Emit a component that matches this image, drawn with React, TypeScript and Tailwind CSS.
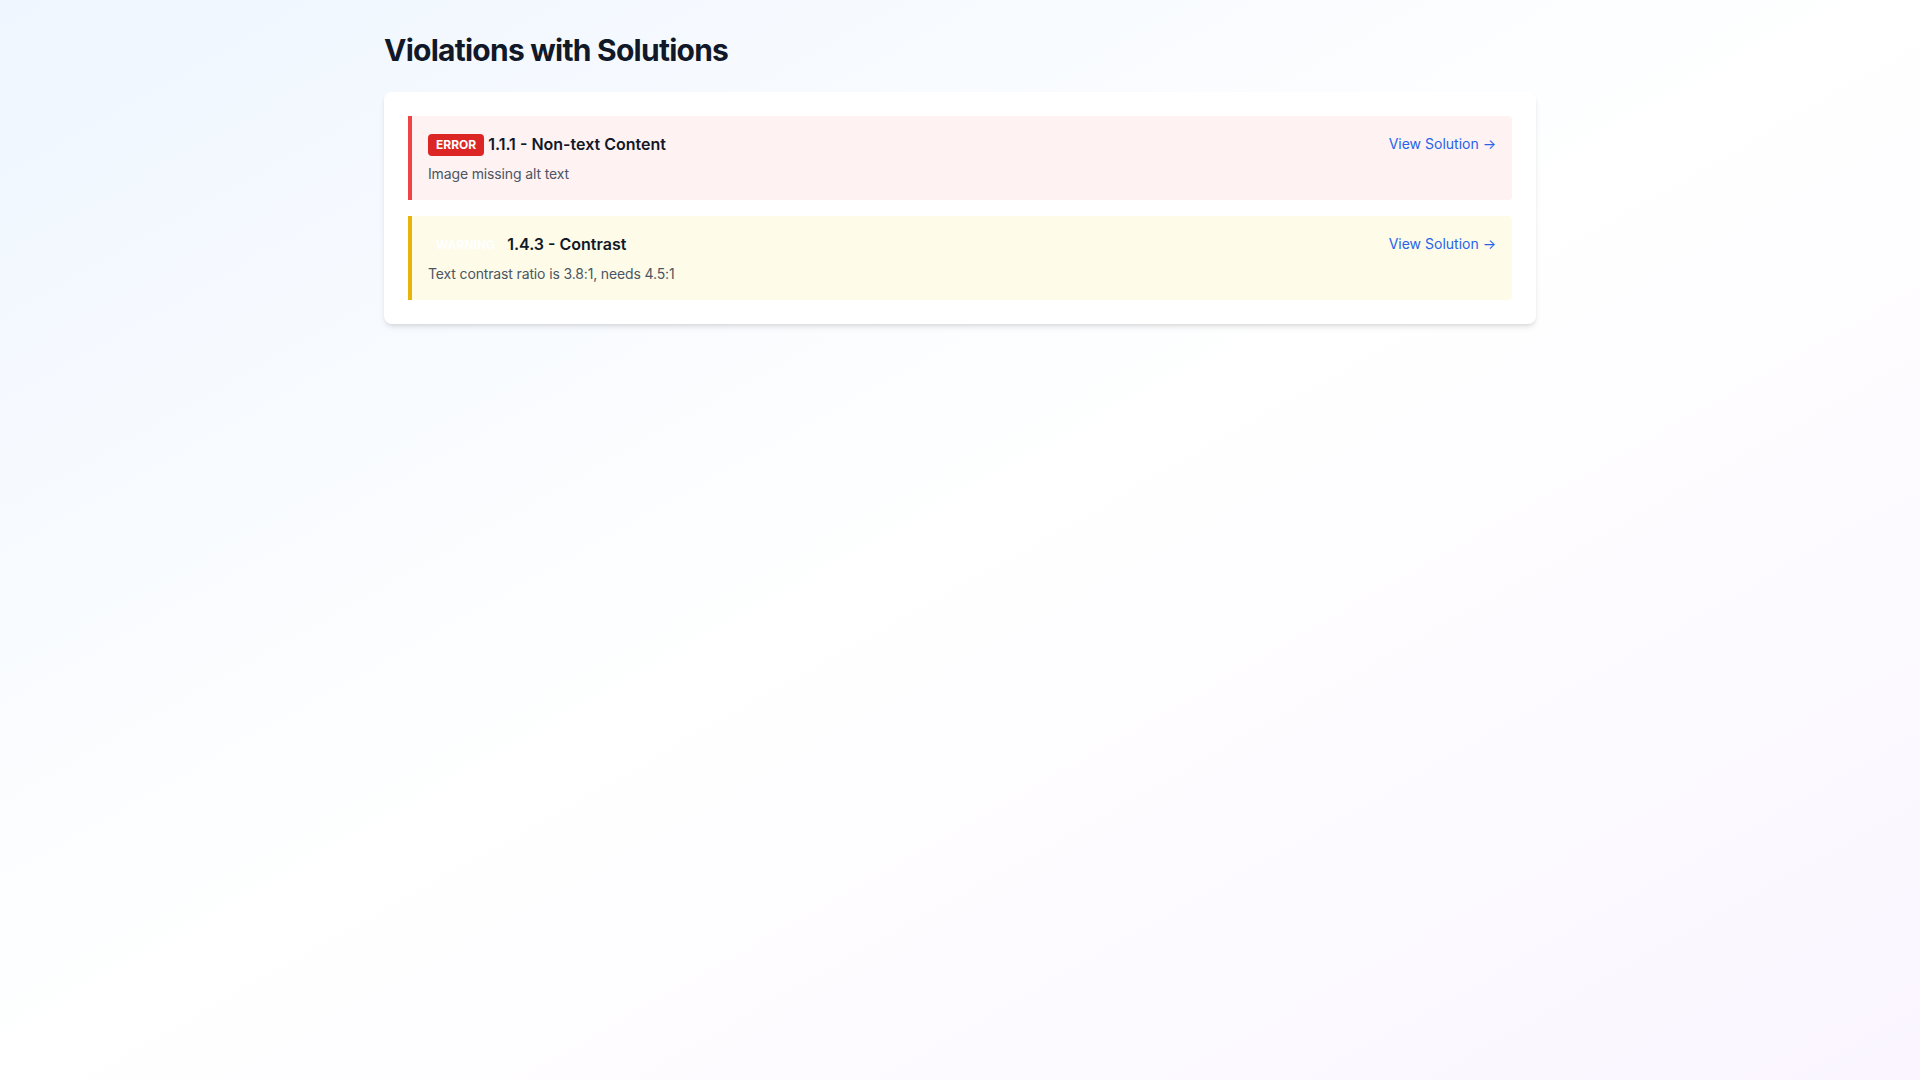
const violations = [
  {
    level: 'error',
    label: 'Error',
    rule: '1.1.1 - Non-text Content',
    message: 'Image missing alt text',
  },
  {
    level: 'warning',
    label: 'Warning',
    rule: '1.4.3 - Contrast',
    message: 'Text contrast ratio is 3.8:1, needs 4.5:1',
  },
];

export default function App() {
  return (
    <div className="min-h-screen bg-gradient-to-br from-[#eff6ff] via-white to-[#faf5ff] p-8 font-['Inter',sans-serif]">
      <div className="max-w-6xl mx-auto">
        <h1 className="text-3xl font-bold tracking-tight text-[#111827] mb-6">Violations with Solutions</h1>
        <div className="bg-white rounded-lg shadow-md p-6 space-y-4">
          {violations.map((v) => (
            <div
              key={v.rule}
              className={
                v.level === 'error'
                  ? 'flex items-start justify-between p-4 border-l-4 border-[#ef4444] bg-[#fef2f2] rounded-r'
                  : 'flex items-start justify-between p-4 border-l-4 border-[#eab308] bg-[#fefce8] rounded-r'
              }
            >
              <div>
                <h3 className="text-base font-semibold text-[#111827]">
                  <span
                    className={
                      v.level === 'error'
                        ? 'inline-block px-2 py-[3px] text-xs font-bold uppercase rounded text-white bg-[#dc2626] leading-4 align-[1px]'
                        : 'inline-block px-2 py-[3px] text-xs font-bold uppercase rounded text-white leading-4 align-[1px]'
                    }
                  >
                    {v.label}
                  </span>{' '}
                  {v.rule}
                </h3>
                <p className="text-sm text-[#4b5563] tracking-[-0.01em] mt-2">{v.message}</p>
              </div>
              <a href="#" className="text-sm text-[#2563eb] hover:underline mt-0.5">
                View Solution →
              </a>
            </div>
          ))}
        </div>
      </div>
    </div>
  );
}
